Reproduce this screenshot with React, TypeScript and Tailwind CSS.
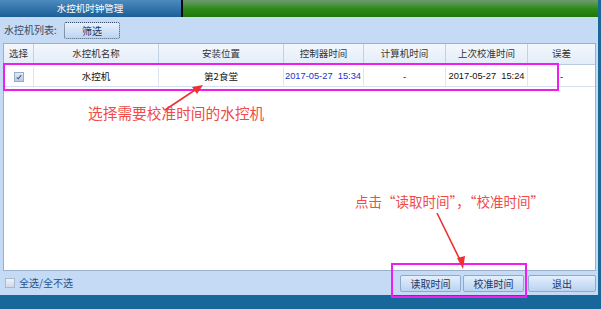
import React from "react";

const cjk = { fontFamily: '"Noto Sans CJK SC", "Noto Sans", sans-serif' };
const num = { fontFamily: '"Liberation Sans", Arial, sans-serif' };

function Btn({ label, w }: { label: string; w: string }) {
  return (
    <div
      className={`${w} h-[17px] flex items-center justify-center rounded-[2px] border border-[#8ea9cc] bg-gradient-to-b from-[#e4effc] to-[#b9d3f1] text-[10px] text-[#1f3766] leading-none`}
      style={cjk}
    >
      {label}
    </div>
  );
}

const cols = [
  { w: "w-[30px]", h: "选择" },
  { w: "w-[125px]", h: "水控机名称" },
  { w: "w-[125px]", h: "安装位置" },
  { w: "w-[80px]", h: "控制器时间" },
  { w: "w-[82px]", h: "计算机时间" },
  { w: "w-[82px]", h: "上次校准时间" },
  { w: "flex-1", h: "误差" },
];

export default function App() {
  return (
    <div className="w-[601px] h-[309px] flex flex-col bg-[#1a6898] relative overflow-hidden" style={cjk}>
      <div className="flex flex-1 min-h-0">
        <div className="w-[598px] flex flex-col">
          {/* top bar */}
          <div className="h-[17px] flex">
            <div className="w-[181px] bg-gradient-to-b from-[#4b8bc0] to-[#1b5e96] flex items-center justify-center text-white text-[9.5px] leading-none">
              <span className="ml-[-1px]">水控机时钟管理</span>
            </div>
            <div className="w-[2px] bg-[#0a0a0a]" />
            <div className="flex-1 bg-gradient-to-b from-[#6d9a6d] via-[#2c8c16] to-[#1d760b]" />
          </div>
          {/* panel */}
          <div className="flex-1 bg-[#c5dbf5] flex flex-col pl-[3px] pr-[2px]">
            <div className="h-[26px] flex items-center">
              <span className="text-[10px] text-[#3b4a62] ml-[1px] leading-none w-[57px]">水控机列表:</span>
              <div className="ml-[3px] mt-[1px] w-[56px] h-[17px] flex items-center justify-center rounded-[2px] border border-dotted border-[#3a4a66] bg-gradient-to-b from-[#e6f0fc] to-[#bcd5f2] text-[10px] text-[#1f3766] leading-none">
                筛选
              </div>
            </div>
            {/* table */}
            <div className="h-[228px] border border-[#98b0cc] bg-white flex flex-col">
              <div className="h-[21px] flex bg-gradient-to-b from-[#f4f8fd] to-[#e3ecf8] border-b border-[#b9cbe0]">
                {cols.map((c, i) => (
                  <div
                    key={i}
                    className={`${c.w} flex items-center justify-center text-[9.5px] text-[#333] leading-none ${i < cols.length - 1 ? "border-r border-[#c2d2e6]" : ""}`}
                  >
                    {c.h}
                  </div>
                ))}
              </div>
              <div className="h-[20px] mt-[2px] flex border-b border-[#d6e0ee] text-[9.5px] leading-none text-[#111]">
                <div className="w-[30px] border-r border-[#dde6f2] flex items-center justify-center">
                  <div className="w-[10px] h-[10px] border border-[#9aabc4] bg-gradient-to-b from-[#e2eaf4] to-[#bccbe0] flex items-center justify-center">
                    <svg width="8" height="8" viewBox="0 0 8 8">
                      <path d="M1.8 4.3 L3.3 5.8 L6.3 2.2" stroke="#3a5c92" strokeWidth="1.1" fill="none" />
                    </svg>
                  </div>
                </div>
                <div className="w-[125px] border-r border-[#dde6f2] flex items-center justify-center">水控机</div>
                <div className="w-[125px] border-r border-[#dde6f2] flex items-center justify-center">第2食堂</div>
                <div className="w-[80px] border-r border-[#dde6f2] flex items-center pl-[1px] text-[#2233cc] text-[9.3px] whitespace-nowrap" style={num}>
                  2017-05-27&nbsp;&nbsp;15:34
                </div>
                <div className="w-[82px] border-r border-[#dde6f2] flex items-center justify-center" style={num}>-</div>
                <div className="w-[82px] border-r border-[#dde6f2] flex items-center justify-center text-[9.3px] whitespace-nowrap" style={num}>
                  2017-05-27&nbsp;&nbsp;15:24
                </div>
                <div className="flex-1 flex items-center justify-center" style={num}>-</div>
              </div>
            </div>
            {/* footer */}
            <div className="flex-1 flex items-center">
              <div className="ml-[2px] w-[10px] h-[10px] border border-[#a9b8cc] bg-gradient-to-b from-[#eef3f9] to-[#cfd9e6]" />
              <span className="ml-[4px] text-[10px] text-[#2c4f86] leading-none">全选/全不选</span>
              <div className="ml-auto flex items-center mt-[1px]">
                <Btn label="读取时间" w="w-[61px]" />
                <div className="w-[2px]" />
                <Btn label="校准时间" w="w-[61px]" />
                <div className="w-[4px]" />
                <Btn label="退出" w="w-[68px]" />
              </div>
            </div>
          </div>
        </div>
        <div className="flex-1 bg-[#1a6898]" />
      </div>
      <div className="h-[14px] bg-[#17679a]" />

      {/* annotations */}
      <div className="absolute left-[3px] top-[63px] w-[556px] h-[28px] border-2 border-[#f01cf0] pointer-events-none" />
      <div className="absolute left-[391px] top-[263px] w-[136px] h-[35px] border-2 border-[#f01cf0] pointer-events-none" />
      <div className="absolute left-[88px] top-[106px] text-[14.7px] leading-none text-[#f24a4a] whitespace-nowrap">
        选择需要校准时间的水控机
      </div>
      <div className="absolute left-[355px] top-[195px] text-[13.5px] leading-none text-[#f24a4a] whitespace-nowrap">
        点击“读取时间”，“校准时间”
      </div>
      <svg className="absolute left-0 top-0 pointer-events-none" width="601" height="309">
        <line x1="165" y1="110" x2="198" y2="88" stroke="#ee3030" strokeWidth="1.6" />
        <polygon points="203,85 192,87 197,94" fill="#ee3030" />
        <line x1="437" y1="213" x2="461" y2="262" stroke="#ee3030" strokeWidth="1.6" />
        <polygon points="463,269 457,258 465,256" fill="#ee3030" />
      </svg>
    </div>
  );
}
